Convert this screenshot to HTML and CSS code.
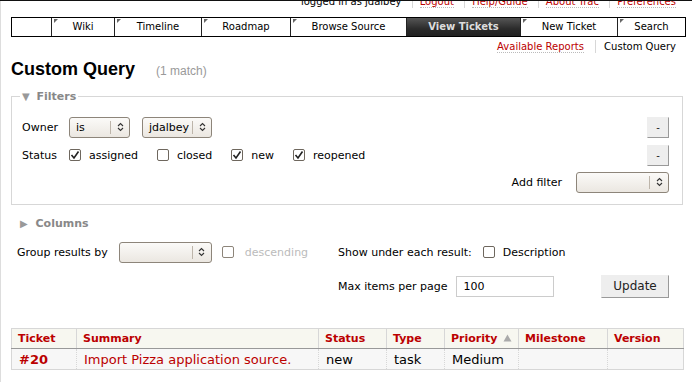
FILE: index.html
```html
<!DOCTYPE html>
<html lang="en">
<head>
    <meta charset="UTF-8">
    <title>Custom Query</title>
    <link rel="stylesheet" href="styles.css">
</head>
<body>
<div class="page">
    <ul class="metanav">
        <li class="first">logged in as jdalbey</li>
        <li><a href="#">Logout</a></li>
        <li><a href="#">Help/Guide</a></li>
        <li><a href="#">About Trac</a></li>
        <li class="last"><a href="#">Preferences</a></li>
    </ul>

    <ul class="mainnav">
        <li class="blank"></li>
        <li class="tab w-wiki">Wiki</li>
        <li class="tab w-timeline">Timeline</li>
        <li class="tab w-roadmap">Roadmap</li>
        <li class="tab w-browser">Browse Source</li>
        <li class="active w-tickets">View Tickets</li>
        <li class="tab w-newticket">New Ticket</li>
        <li class="tab w-search">Search</li>
    </ul>

    <ul class="ctxtnav">
        <li class="first"><a href="#">Available Reports</a></li>
        <li class="last">Custom Query</li>
    </ul>

    <h1>Custom Query <span class="numrows">(1 match)</span></h1>

    <fieldset class="filters">
        <legend><span class="arrow">&#9660;</span> Filters</legend>
        <div class="filter-rows">
            <div class="filter-row">
                <span class="flabel">Owner</span>
                <div class="fcontrols">
                    <div class="select w-is"><span class="sel-text">is</span><span class="sel-arrow"><svg width="7" height="10" viewBox="0 0 7 10"><path d="M1 4 L3.5 1.5 L6 4 M1 6 L3.5 8.5 L6 6" fill="none" stroke="#333" stroke-width="1.1"/></svg></span></div>
                    <div class="select w-owner"><span class="sel-text">jdalbey</span><span class="sel-arrow"><svg width="7" height="10" viewBox="0 0 7 10"><path d="M1 4 L3.5 1.5 L6 4 M1 6 L3.5 8.5 L6 6" fill="none" stroke="#333" stroke-width="1.1"/></svg></span></div>
                </div>
                <button class="rm">-</button>
            </div>
            <div class="filter-row">
                <span class="flabel">Status</span>
                <div class="fcontrols">
                    <label class="opt"><span class="cb checked"><svg width="10" height="10" viewBox="0 0 10 10"><path d="M1.5 5 L4 8 L8.5 1.5" fill="none" stroke="#222" stroke-width="1.6"/></svg></span>assigned</label>
                    <label class="opt"><span class="cb"></span>closed</label>
                    <label class="opt"><span class="cb checked"><svg width="10" height="10" viewBox="0 0 10 10"><path d="M1.5 5 L4 8 L8.5 1.5" fill="none" stroke="#222" stroke-width="1.6"/></svg></span>new</label>
                    <label class="opt"><span class="cb checked"><svg width="10" height="10" viewBox="0 0 10 10"><path d="M1.5 5 L4 8 L8.5 1.5" fill="none" stroke="#222" stroke-width="1.6"/></svg></span>reopened</label>
                </div>
                <button class="rm">-</button>
            </div>
            <div class="add-row">
                <span>Add filter</span>
                <div class="select w-wide"><span class="sel-text"></span><span class="sel-arrow"><svg width="7" height="10" viewBox="0 0 7 10"><path d="M1 4 L3.5 1.5 L6 4 M1 6 L3.5 8.5 L6 6" fill="none" stroke="#333" stroke-width="1.1"/></svg></span></div>
            </div>
        </div>
    </fieldset>

    <div class="columns-toggle"><span class="arrow">&#9654;</span> Columns</div>

    <div class="options">
        <div class="opt-left">
            <div class="opt-row">
                <span>Group results by</span>
                <div class="select w-wide"><span class="sel-text"></span><span class="sel-arrow"><svg width="7" height="10" viewBox="0 0 7 10"><path d="M1 4 L3.5 1.5 L6 4 M1 6 L3.5 8.5 L6 6" fill="none" stroke="#333" stroke-width="1.1"/></svg></span></div>
                <label class="opt disabled"><span class="cb"></span>descending</label>
            </div>
        </div>
        <div class="opt-right">
            <div class="opt-row">
                <span>Show under each result:</span>
                <label class="opt"><span class="cb"></span>Description</label>
            </div>
            <div class="opt-row">
                <span class="max-label">Max items per page</span>
                <input class="max" type="text" value="100">
                <button class="update">Update</button>
            </div>
        </div>
    </div>

    <table class="listing">
        <colgroup>
            <col class="c-ticket"><col class="c-summary"><col class="c-status"><col class="c-type">
            <col class="c-priority"><col class="c-milestone"><col class="c-version">
        </colgroup>
        <thead>
            <tr>
                <th>Ticket</th>
                <th>Summary</th>
                <th>Status</th>
                <th>Type</th>
                <th>Priority <svg class="sort" width="9" height="8" viewBox="0 0 9 8"><path d="M0.5 7.5 L4.5 0.5 L8.5 7.5 Z" fill="#aaa"/></svg></th>
                <th>Milestone</th>
                <th>Version</th>
            </tr>
        </thead>
        <tbody>
            <tr>
                <td class="id"><a href="#">#20</a></td>
                <td class="summary"><a href="#">Import Pizza application source.</a></td>
                <td>new</td>
                <td>task</td>
                <td>Medium</td>
                <td></td>
                <td></td>
            </tr>
        </tbody>
    </table>
</div>
</body>
</html>
```

FILE: styles.css
```css
body {
    margin: 0;
    font-family: "DejaVu Sans", Verdana, sans-serif;
    font-size: 11px;
    color: #000;
    background-color: #fff;
    border-left: 1px solid #ddd;
    min-height: 382px;
    box-sizing: border-box;
}
body::before {
    content: "";
    position: fixed;
    top: 0;
    left: 0;
    right: 0;
    height: 1px;
    background-color: #111;
}
.page {
    padding: 1px 9px 0 10px;
}
a {
    color: #b00;
    text-decoration: none;
}

/* top links */
.metanav, .ctxtnav {
    list-style: none;
    margin: 0;
    padding: 0 7px 0 0;
    text-align: right;
    font-size: 10px;
    line-height: 13px;
}
.metanav {
    margin-top: -6px;
}
.metanav li, .ctxtnav li {
    display: inline-block;
    padding: 0 7px;
    border-left: 1px solid #d7d7d7;
}
.metanav li.first, .ctxtnav li.first {
    border-left: none;
}
.metanav li.last, .ctxtnav li.last {
    padding-right: 0;
}
.metanav a, .ctxtnav a {
    border-bottom: 1px dotted #bbb;
}
.ctxtnav {
    margin-top: 3px;
}
.ctxtnav li {
    padding: 0 8px;
}

/* main navigation */
.mainnav {
    list-style: none;
    margin: 9px -3px 0 0;
    padding: 0;
    display: flex;
    border: 1px solid #000;
    height: 18px;
    font-size: 10px;
    line-height: 18px;
}
.mainnav li {
    position: relative;
    text-align: center;
    border-left: 1px solid #222;
    box-sizing: border-box;
}
.mainnav li.blank {
    border-left: none;
    width: 39px;
}
.mainnav li.tab::before {
    content: "";
    position: absolute;
    top: 1px;
    left: 2px;
    border-top: 4px solid #666;
    border-right: 4px solid transparent;
}
.mainnav li.active {
    background: linear-gradient(#555, #2b2b2b 60%, #222);
    color: #ddd;
    font-weight: bold;
}
.w-wiki { width: 63px; }
.w-timeline { width: 87px; }
.w-roadmap { width: 89px; }
.w-browser { width: 116px; }
.w-tickets { width: 114px; }
.w-newticket { width: 97px; }
.w-search { width: 68px; }

h1 {
    font-family: "Liberation Sans", Arial, sans-serif;
    font-size: 18px;
    line-height: 22px;
    margin: 5px 0 8px 0;
}
.numrows {
    font-size: 12px;
    font-weight: normal;
    color: #999;
    margin-left: 16px;
}

/* filters */
.filters {
    margin: 0;
    border: 1px solid #d7d7d7;
    padding: 0 13px 9px 10px;
}
.filters legend {
    padding: 0 2px;
    margin-left: -2px;
    font-weight: bold;
    color: #888;
    line-height: 13px;
}
.arrow {
    font-size: 10px;
    color: #999;
    margin-right: 3px;
}
.filter-rows {
    margin-top: 10px;
}
.filter-row {
    display: flex;
    align-items: center;
    height: 28px;
}
.flabel {
    width: 47px;
}
.fcontrols {
    flex: 1;
    display: flex;
    align-items: center;
}
.add-row {
    display: flex;
    justify-content: flex-end;
    align-items: center;
    gap: 14px;
    height: 26px;
}

.select {
    display: inline-flex;
    align-items: center;
    height: 21px;
    box-sizing: border-box;
    border: 1px solid #8d857a;
    border-radius: 3px;
    background: linear-gradient(#fbfaf8, #ebe7e1);
    margin-right: 12px;
}
.add-row .select {
    margin-right: 0;
}
.sel-text {
    flex: 1;
    padding-left: 6px;
    color: #000;
}
.sel-arrow {
    width: 18px;
    height: 13px;
    border-left: 1px solid #bdb5aa;
    display: flex;
    align-items: center;
    justify-content: center;
}
.w-is { width: 61px; }
.w-owner { width: 70px; }
.w-wide { width: 93px; }

.opt {
    display: inline-flex;
    align-items: center;
    margin-right: 19px;
}
.cb {
    width: 12px;
    height: 12px;
    box-sizing: border-box;
    border: 1px solid #6e675e;
    border-radius: 2px;
    background-color: #fff;
    margin-right: 8px;
    display: inline-flex;
    align-items: center;
    justify-content: center;
}
.opt.disabled {
    color: #bbb;
}
.opt.disabled .cb {
    border-color: #8d857a;
}

button {
    font-family: "DejaVu Sans", Verdana, sans-serif;
    background-color: #eee;
    border: 1px solid;
    border-color: #eee #999 #999 #eee;
    color: #222;
    padding: 0;
    margin: 0;
}
.rm {
    width: 22px;
    height: 21px;
    font-size: 10px;
}

.columns-toggle {
    margin: 12px 0 0 9px;
    font-weight: bold;
    color: #888;
    line-height: 14px;
}
.columns-toggle .arrow {
    margin-right: 4px;
}

/* options */
.options {
    display: flex;
    margin-top: 9px;
    padding-left: 6px;
}
.opt-left {
    width: 321px;
}
.opt-right {
    width: 331px;
}
.opt-row {
    display: flex;
    align-items: center;
    height: 24px;
    margin-bottom: 10px;
}
.opt-left .opt-row span:first-child {
    margin-right: 11px;
}
.opt-left .select {
    margin-right: 10px;
}
.opt-right .opt-row > span:first-child {
    margin-right: 11px;
}
.opt-right .opt-row > span.max-label {
    margin-right: 8px;
}
.max {
    width: 98px;
    height: 21px;
    box-sizing: border-box;
    border: 1px solid #ccc;
    padding: 0 7px;
    font-family: "DejaVu Sans", Verdana, sans-serif;
    font-size: 11px;
    margin: 0;
}
.update {
    margin-left: auto;
    width: 68px;
    height: 23px;
    font-size: 12px;
}

/* ticket listing */
.listing {
    margin-top: 20px;
    width: 672px;
    table-layout: fixed;
    border-collapse: collapse;
    border: 1px solid #d7d7d7;
}
.c-ticket { width: 65px; }
.c-summary { width: 242px; }
.c-status { width: 68px; }
.c-type { width: 58px; }
.c-priority { width: 74px; }
.c-milestone { width: 89px; }
.c-version { width: 76px; }
.listing th {
    background-color: #f7f7f0;
    color: #b00;
    font-weight: bold;
    text-align: left;
    font-size: 11px;
    height: 19px;
    padding: 0 6px;
    border-right: 1px solid #d7d7d7;
    border-bottom: 1px solid #999;
    white-space: nowrap;
}
.sort {
    vertical-align: 0;
    margin-left: 2px;
}
.listing td {
    background-color: #f7f7f7;
    font-size: 13px;
    height: 20px;
    padding: 0 7px;
    border-right: 1px dotted #d7d7d7;
    border-bottom: 1px solid #d7d7d7;
    white-space: nowrap;
}
.listing td.id a {
    font-weight: bold;
}
```
